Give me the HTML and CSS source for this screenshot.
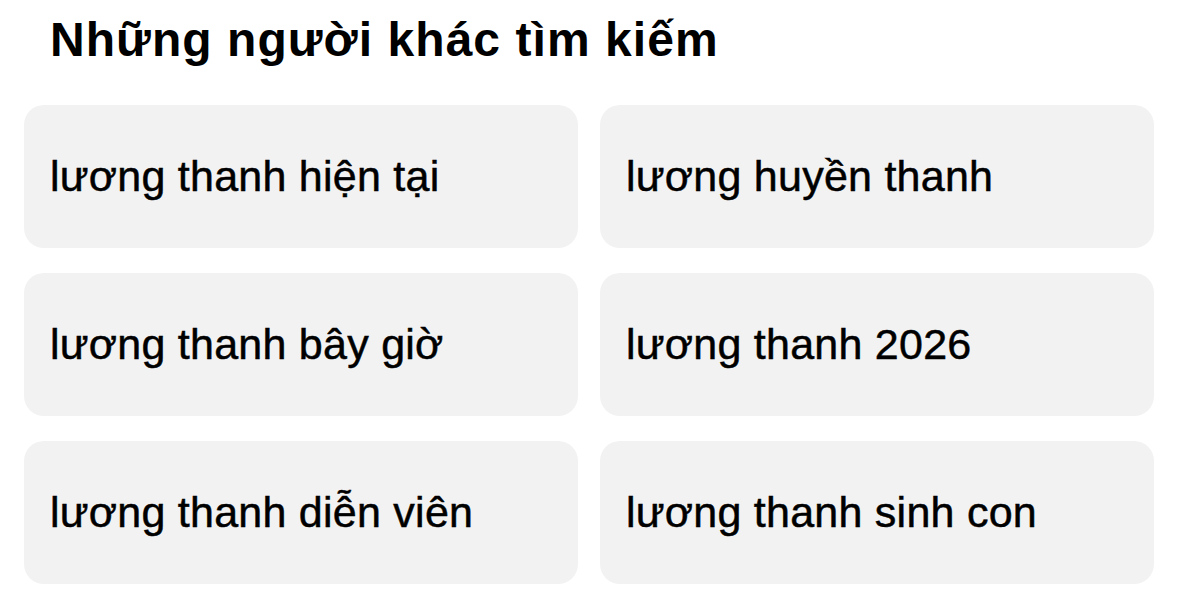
FILE: index.html
```html
<!DOCTYPE html>
<html lang="vi">
<head>
<meta charset="utf-8">
<title>Những người khác tìm kiếm</title>
<link rel="stylesheet" href="styles.css">
</head>
<body>
<section class="related">
  <h2 class="related-title">Những người khác tìm kiếm</h2>
  <div class="related-grid">
    <a class="chip" href="#">lương thanh hiện tại</a>
    <a class="chip" href="#">lương huyền thanh</a>
    <a class="chip" href="#">lương thanh bây giờ</a>
    <a class="chip" href="#">lương thanh 2026</a>
    <a class="chip" href="#">lương thanh diễn viên</a>
    <a class="chip" href="#">lương thanh sinh con</a>
  </div>
</section>
</body>
</html>
```
FILE: styles.css
```css
html, body {
  margin: 0;
  padding: 0;
  background: #ffffff;
}

body {
  font-family: "Liberation Sans", Arial, sans-serif;
  color: #000000;
}

.related {
  padding: 10px 25px 0 24px;
}

.related-title {
  margin: 0 0 0 26px;
  font-size: 48px;
  font-weight: 700;
  line-height: 60px;
  letter-spacing: 1.05px;
}

.related-grid {
  margin-top: 35px;
  display: grid;
  grid-template-columns: 1fr 1fr;
  grid-auto-rows: 143px;
  column-gap: 22px;
  row-gap: 25px;
}

.chip {
  display: flex;
  align-items: center;
  padding: 0 26px;
  background: #f2f2f2;
  border-radius: 20px;
  color: #000000;
  text-decoration: none;
  font-size: 43px;
  font-weight: 400;
  letter-spacing: 0.25px;
  -webkit-text-stroke: 0.5px #000000;
}
```
